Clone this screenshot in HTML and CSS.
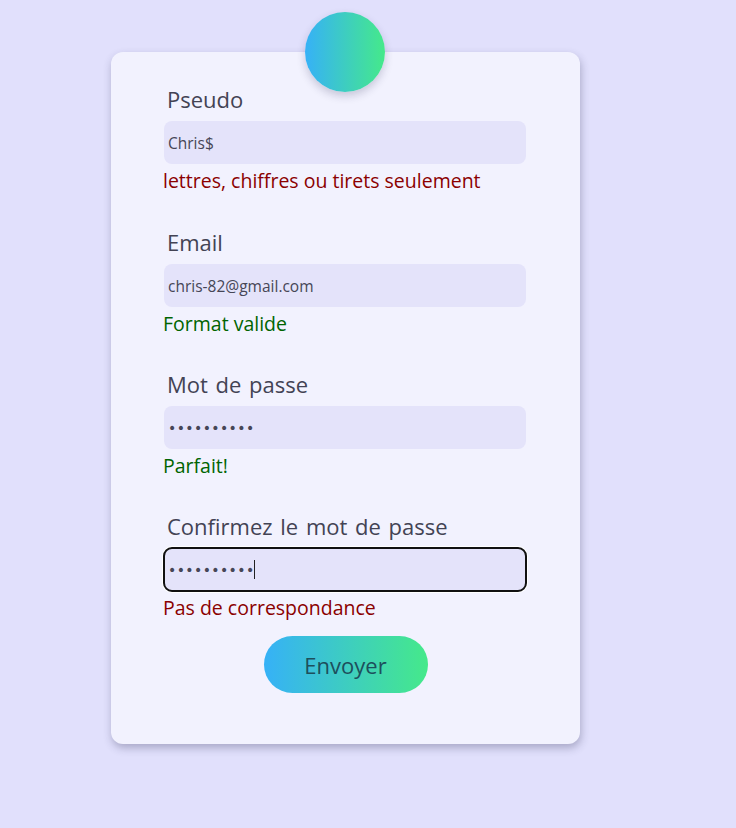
FILE: index.html
```html
<!DOCTYPE html>
<html lang="fr">
<head>
<meta charset="utf-8">
<title>Inscription</title>
<link rel="stylesheet" href="styles.css">
</head>
<body>
<main class="page">
  <form class="card">
    <div class="avatar"></div>
    <div class="field field-first">
      <label class="label" for="pseudo">Pseudo</label>
      <input class="input" id="pseudo" type="text" value="Chris$">
      <p class="msg msg-error">lettres, chiffres ou tirets seulement</p>
    </div>
    <div class="field">
      <label class="label" for="email">Email</label>
      <input class="input" id="email" type="text" value="chris-82@gmail.com">
      <p class="msg msg-ok">Format valide</p>
    </div>
    <div class="field">
      <label class="label" for="pwd">Mot de passe</label>
      <input class="input" id="pwd" type="password" value="abcdefghij">
      <p class="msg msg-ok">Parfait!</p>
    </div>
    <div class="field field-last">
      <label class="label" for="pwd2">Confirmez le mot de passe</label>
      <div class="input-wrap">
        <input class="input input-focus" id="pwd2" type="password" value="abcdefghik">
        <span class="caret"></span>
      </div>
      <p class="msg msg-error">Pas de correspondance</p>
    </div>
    <div class="actions">
      <button class="btn" type="button">Envoyer</button>
    </div>
  </form>
</main>
</body>
</html>
```

FILE: styles.css
```css
* { box-sizing: border-box; }
html, body { margin: 0; padding: 0; }
body {
  background: #e1e0fc;
  font-family: "Open Sans", "DejaVu Sans", sans-serif;
  min-height: 828px;
}
.page {
  padding: 52px 0 0 111px;
}
.card {
  position: relative;
  width: 469px;
  background: #f2f2fe;
  border-radius: 12px;
  box-shadow: 1px 4px 9px rgba(40, 40, 80, 0.3);
  padding: 34px 0 51px 52px;
}
.avatar {
  position: absolute;
  top: -40px;
  left: 194px;
  width: 80px;
  height: 80px;
  border-radius: 50%;
  background: linear-gradient(90deg, #36b1f7, #45e98a);
  box-shadow: 0 4px 8px rgba(40, 40, 80, 0.22);
}
.field {
  display: flex;
  flex-direction: column;
  align-items: flex-start;
  margin-bottom: 36px;
}
.field-first { margin-bottom: 37px; }
.field-last { margin-bottom: 17px; }
.label {
  font-size: 22px;
  line-height: 26px;
  word-spacing: 2px;
  color: #434354;
  padding-left: 4px;
  margin-bottom: 9px;
}
.input-wrap { position: relative; }
.input {
  width: 362px;
  height: 43px;
  margin: 0 0 0 1px;
  border: none;
  border-radius: 8px;
  background: #e4e3fa;
  padding: 0 4px;
  font-family: "Open Sans", "DejaVu Sans", sans-serif;
  font-size: 15.5px;
  color: #464656;
  outline: none;
}
.input[type="password"] {
  font-family: "DejaVu Sans", sans-serif;
  font-size: 14px;
  letter-spacing: 0.4px;
}
.input-focus {
  outline: 2px solid #111;
  outline-offset: -1px;
  box-shadow: 0 0 0 2px #fff;
}
.caret {
  position: absolute;
  left: 91px;
  top: 12px;
  width: 1px;
  height: 19px;
  background: #222;
}
.msg {
  margin: 6px 0 0 0;
  font-size: 19.5px;
  line-height: 22px;
}
.msg-error { color: #8b0000; }
.msg-ok { color: #006400; }
.actions {
  width: 365px;
  display: flex;
  justify-content: center;
}
.btn {
  width: 164px;
  height: 57px;
  border: none;
  border-radius: 29px;
  background: linear-gradient(90deg, #36b1f7, #45e98a);
  font-family: "Open Sans", "DejaVu Sans", sans-serif;
  font-size: 22px;
  color: #1d4f5c;
  cursor: pointer;
}
```
